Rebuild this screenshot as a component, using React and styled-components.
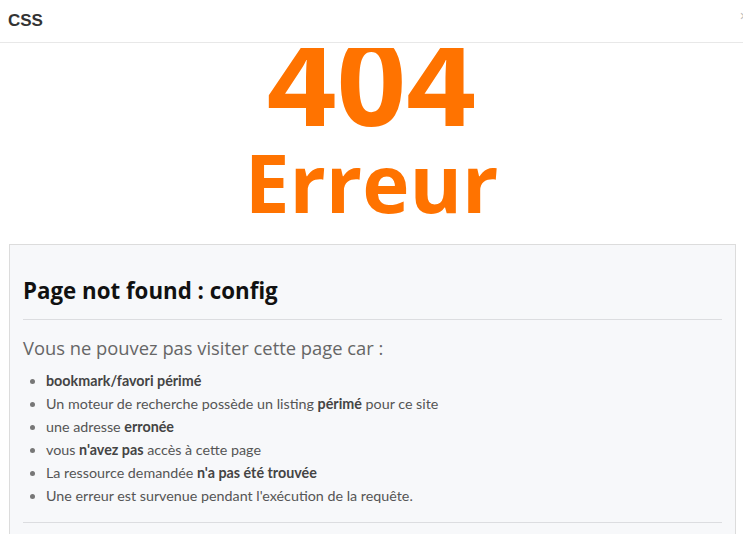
import React from "react";
import styled, { createGlobalStyle } from "styled-components";

const Global = createGlobalStyle`
  html, body { margin: 0; padding: 0; background: #fff; }
  body { font-family: "Open Sans", "Noto Sans", sans-serif; }
`;

const Page = styled.div`
  width: 743px;
  height: 534px;
  overflow: hidden;
  background: #fff;
`;

const Header = styled.header`
  height: 42px;
  border-bottom: 1px solid #e8e8e8;
  display: flex;
  align-items: center;
  justify-content: space-between;
  padding: 0 0 0 8px;
  overflow: hidden;
`;

const Title = styled.div`
  font-family: "Liberation Sans", Arial, sans-serif;
  font-weight: 700;
  font-size: 17px;
  color: #333;
`;

const Close = styled.span`
  font-family: "Liberation Sans", Arial, sans-serif;
  font-size: 14px;
  color: #bbb;
  margin-right: -5px;
  margin-top: -10px;
`;

const Body = styled.main`
  margin-top: 5px;
  overflow: hidden;
  height: 486px;
`;

const Hero = styled.div`
  text-align: center;
  color: #ff7300;
  font-family: "Open Sans", sans-serif;
  font-weight: 700;
`;

const Code = styled.div`
  font-size: 122px;
  line-height: 123px;
  margin-top: -30px;
`;

const Word = styled.div`
  font-size: 80px;
  line-height: 80px;
  margin-top: 1px;
`;

const Card = styled.section`
  margin: 22px 7px 0 9px;
  background: #f7f8fa;
  border: 1px solid #dcdcdc;
  padding: 0 13px 20px;
`;

const Heading = styled.h3`
  margin: 33px 0 0;
  font-family: "Open Sans", sans-serif;
  font-weight: 700;
  font-size: 22.3px;
  line-height: 26.4px;
  color: #111;
`;

const Rule = styled.hr`
  border: 0;
  border-top: 1px solid #dcdde0;
  margin: ${(p) => p.$top}px 0 0;
`;

const Lead = styled.p`
  margin: 14px 0 0;
  font-family: "Open Sans", sans-serif;
  font-size: 18.35px;
  line-height: 27px;
  color: #666;
`;

const List = styled.ul`
  margin: 8px 0 0;
  padding-left: 23px;
  font-family: Lato, "Open Sans", sans-serif;
  font-size: 14.3px;
  line-height: 23px;
  color: #555;
  li::marker { color: #777; }
  b { color: #444; font-weight: 700; }
`;

export default function App() {
  return (
    <Page>
      <Global />
      <Header>
        <Title>CSS</Title>
        <Close>×</Close>
      </Header>
      <Body>
        <Hero>
          <Code>404</Code>
          <Word>Erreur</Word>
        </Hero>
        <Card>
          <Heading>Page not found : config</Heading>
          <Rule $top={15} />
          <Lead>Vous ne pouvez pas visiter cette page car :</Lead>
          <List>
            <li><b>bookmark/favori périmé</b></li>
            <li>Un moteur de recherche possède un listing <b>périmé</b> pour ce site</li>
            <li>une adresse <b>erronée</b></li>
            <li>vous <b>n'avez pas</b> accès à cette page</li>
            <li>La ressource demandée <b>n'a pas été trouvée</b></li>
            <li>Une erreur est survenue pendant l'exécution de la requête.</li>
          </List>
          <Rule $top={15} />
        </Card>
      </Body>
    </Page>
  );
}
